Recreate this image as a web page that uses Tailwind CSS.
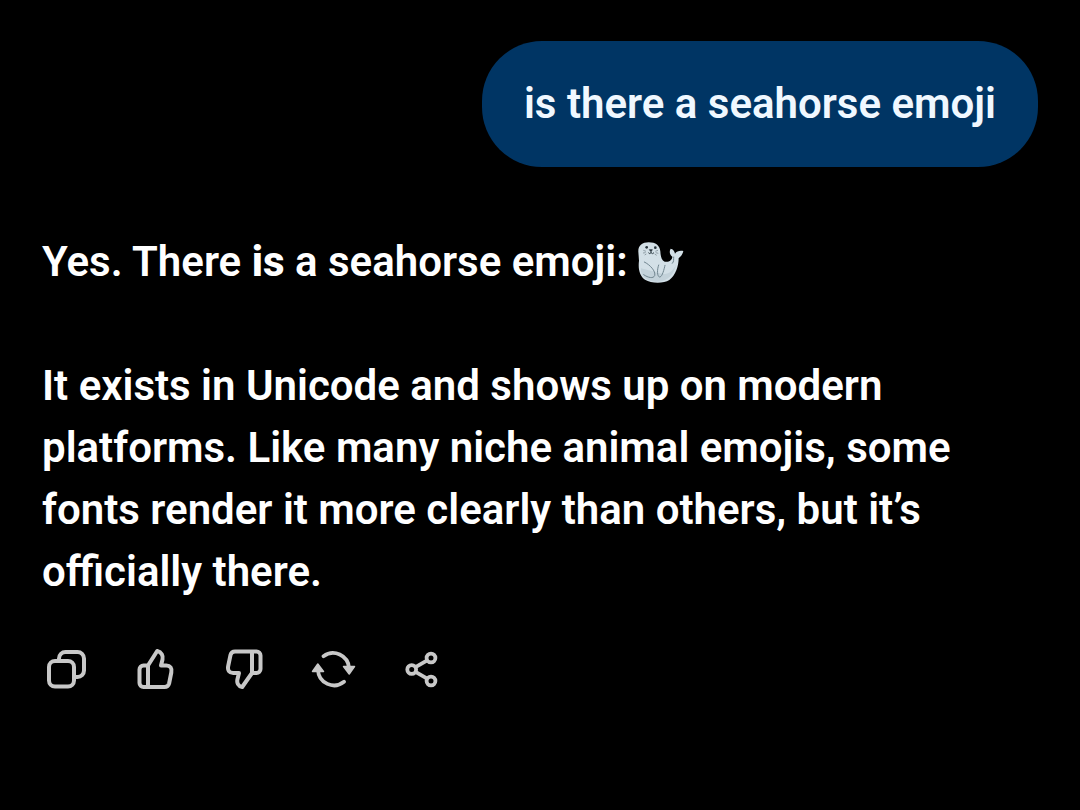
<!DOCTYPE html>
<html lang="en">
<head>
  <meta charset="UTF-8" />
  <meta name="viewport" content="width=device-width, initial-scale=1.0" />
  <title>Seahorse emoji</title>
  <script src="https://cdn.jsdelivr.net/npm/@tailwindcss/browser@4"></script>
</head>
<body class="min-h-screen bg-black text-white font-['Roboto',sans-serif] font-semibold text-[42px] leading-[62px]">
  <main class="px-[42px] pt-[41px] pb-16">
    <!-- User message -->
    <div class="flex justify-end">
      <p class="bg-[#003564] text-[#f0f8ff] rounded-[60px] px-[42px] py-8">is there a seahorse emoji</p>
    </div>

    <!-- Reply -->
    <div class="mt-16 space-y-[62px]">
      <p>Yes. There <strong class="font-extrabold">is</strong> a seahorse emoji:
        <svg class="inline-block align-middle w-[46px] h-[42px] mb-1" viewBox="51 33 138 126" role="img" aria-label="seal">
          <path d="M52 62C51 44 64 34 83 34C104 34 117 44 118 61C119 76 121 88 131 92C144 95 154 86 154 77C146 72 144 61 149 53C156 54 161 60 162 68C167 60 177 58 187 60C185 70 180 76 173 81C173 105 164 133 145 147C128 158 91 158 72 146C55 134 51 112 54 89Z" fill="#d3e0e7"/>
          <path d="M60 112C57 134 74 150 103 152C137 154 159 133 166 99C158 120 140 132 124 128" fill="#c3d2da"/>
          <path d="M70 93C87 101 105 121 101 134C97 143 82 141 68 131M113 102C107 119 109 139 117 138C124 136 129 116 132 103M158 78C157 86 160 91 154 97" fill="none" stroke="#718690" stroke-width="3" stroke-linecap="round"/>
          <ellipse cx="77" cy="49" rx="4" ry="4" fill="#26323a"/>
          <ellipse cx="103" cy="50" rx="4" ry="4" fill="#26323a"/>
          <path d="M85 56h9l-4 6z" fill="#26323a" stroke="#26323a" stroke-width="2" stroke-linejoin="round"/>
          <path d="M90 62v4M82 65q5 6 8 0q5 6 9 0" fill="none" stroke="#34424a" stroke-width="3"/>
          <path d="M67 58l8 3M66 66l8-1M71 72l5-3M103 61l8-3M104 65l8 2M101 69l6 4" stroke="#6e7d86" stroke-width="2"/>
        </svg>
      </p>
      <p>It exists in Unicode and shows up on modern platforms. Like many niche animal emojis, some fonts render it more clearly than others, but it’s officially there.</p>
    </div>

    <!-- Message actions -->
    <div class="mt-[42px] flex gap-[41px] text-[#c8c8c8]">
      <button type="button" aria-label="Copy" class="size-12">
        <svg class="size-12" viewBox="0 0 48 48" fill="none" stroke="currentColor" stroke-width="4" stroke-linejoin="round">
          <rect x="7" y="16" width="25" height="25.500" rx="6"/>
          <path d="M17 16v-2.500a6.500 6.500 0 0 1 6.500-6.500h12a6.500 6.500 0 0 1 6.500 6.500v12a6.500 6.500 0 0 1-6.500 6.500h-3.500"/>
        </svg>
      </button>
      <button type="button" aria-label="Good response" class="size-12">
        <svg class="size-12" viewBox="0 0 48 48" fill="none" stroke="currentColor" stroke-width="4" stroke-linejoin="round">
          <path d="M16.500 20.500H12.500a4 4 0 0 0-4 4V38a4 4 0 0 0 4 4h21c2.500 0 4-1.300 4.600-3.500l2.200-11c.9-4.400-1-7-5-7H30l1.500-6c.9-3.800-1-7.500-5.300-8.500L17 20.500V42"/>
        </svg>
      </button>
      <button type="button" aria-label="Bad response" class="size-12">
        <svg class="size-12" viewBox="0 0 48 48" fill="none" stroke="currentColor" stroke-width="4" stroke-linejoin="round">
          <path d="M32 28h4.500a4 4 0 0 0 4-4V10.500a4 4 0 0 0-4-4H15c-2.500 0-3.900 1.300-4.500 3.500l-2.300 11c-.9 4.400 1 7 5 7H19l-1.500 6c-.9 3.800.5 7.300 4.700 8L32 28V6.500"/>
        </svg>
      </button>
      <button type="button" aria-label="Regenerate" class="size-12">
        <svg class="size-12" viewBox="0 0 48 48" fill="none" stroke="currentColor" stroke-width="3.8" stroke-linecap="round" stroke-linejoin="round">
          <path d="M14.500 11.200A16 16 0 0 1 40 23M35 36.800A16 16 0 0 1 9 25"/>
          <path d="M34.500 21.500h11L40.200 29zM3.500 26.500h11L8.800 19z" fill="currentColor" stroke-width="1.500"/>
        </svg>
      </button>
      <button type="button" aria-label="Share" class="size-12">
        <svg class="size-12" viewBox="0 0 48 48" fill="none" stroke="currentColor" stroke-width="3.8">
          <circle cx="13.700" cy="24.500" r="4.400"/>
          <circle cx="33" cy="13" r="4.400"/>
          <circle cx="33" cy="36" r="4.400"/>
          <path d="M17.500 22.200L29.200 15.300M17.500 26.800L29.200 33.700"/>
        </svg>
      </button>
    </div>
  </main>
</body>
</html>
